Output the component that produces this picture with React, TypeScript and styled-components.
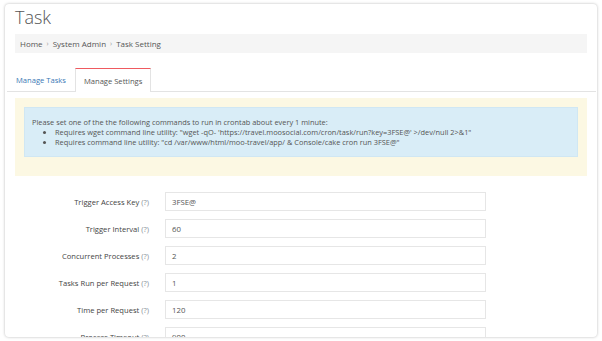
import React from "react";
import styled, { createGlobalStyle } from "styled-components";

const GlobalStyle = createGlobalStyle`
  html, body {
    margin: 0;
    padding: 0;
    background: #fff;
  }
  body {
    font-family: "Open Sans", "Liberation Sans", sans-serif;
    color: #555;
  }
`;

const Page = styled.div`
  padding: 4px 5px;
  height: 341px;
  box-sizing: border-box;
`;

const Card = styled.div`
  height: 333px;
  box-sizing: border-box;
  background: #fff;
  border-radius: 4px;
  box-shadow: 0 0 3px rgba(0, 0, 0, 0.28);
  overflow: hidden;
  padding: 0 10px;
`;

const Title = styled.h1`
  margin: 0;
  padding-top: 2px;
  font-size: 18px;
  font-weight: 300;
  line-height: 22px;
  color: #555;
`;

const Breadcrumb = styled.div`
  margin-top: 6px;
  height: 19px;
  background: #f5f5f5;
  display: flex;
  align-items: center;
  padding: 0 5px;
  font-size: 8px;
  color: #555;
  gap: 4px;
`;

const Sep = styled.span`
  color: #999;
  font-size: 7px;
`;

const Tabs = styled.div`
  margin: 14px -9px 0 -8px;
  height: 24px;
  border-bottom: 1px solid #e3e3e3;
  display: flex;
  align-items: flex-end;
  padding-left: 1px;
`;

const Tab = styled.div<{ $active?: boolean }>`
  height: ${(p) => (p.$active ? "24px" : "23px")};
  box-sizing: border-box;
  display: flex;
  align-items: center;
  font-size: 7.6px;
  color: ${(p) => (p.$active ? "#555" : "#3a78b5")};
  margin-bottom: ${(p) => (p.$active ? "-1px" : "0")};
  background: #fff;
  border-top: ${(p) => (p.$active ? "1px solid #ef5a60" : "none")};
  border-left: ${(p) => (p.$active ? "1px solid #e3e3e3" : "none")};
  border-right: ${(p) => (p.$active ? "1px solid #e3e3e3" : "none")};
  padding-left: ${(p) => (p.$active ? "8px" : "8px")};
  padding-right: ${(p) => (p.$active ? "8px" : "9px")};
`;

const Notice = styled.div`
  margin-top: 6px;
  background: #fcf8e3;
  padding: 9px 9px 19px 9px;
`;

const Info = styled.div`
  background: #d9edf7;
  border: 1px solid #d0e7f3;
  padding: 9px 8px 9px 7px;
  font-size: 7.4px;
  line-height: 10px;
  color: #555;
`;

const List = styled.ul`
  margin: 0;
  padding-left: 23px;
`;

const Form = styled.div`
  margin-top: 16px;
  display: flex;
  flex-direction: column;
  gap: 8px;
`;

const Row = styled.div`
  display: grid;
  grid-template-columns: 134px 321px;
  column-gap: 16px;
  align-items: center;
`;

const Label = styled.label`
  text-align: right;
  font-size: 7.6px;
  color: #444;
`;

const Help = styled.span`
  color: #8a909a;
`;

const Input = styled.div`
  height: 19px;
  box-sizing: border-box;
  border: 1px solid #e6e6e6;
  display: flex;
  align-items: center;
  padding-left: 6px;
  font-size: 7.8px;
  color: #555;
`;

const fields = [
  ["Trigger Access Key", "3FSE@"],
  ["Trigger Interval", "60"],
  ["Concurrent Processes", "2"],
  ["Tasks Run per Request", "1"],
  ["Time per Request", "120"],
  ["Process Timeout", "900"],
];

export default function App() {
  return (
    <>
      <GlobalStyle />
      <Page>
        <Card>
          <Title>Task</Title>
          <Breadcrumb>
            <span>Home</span>
            <Sep>›</Sep>
            <span>System Admin</span>
            <Sep>›</Sep>
            <span>Task Setting</span>
          </Breadcrumb>
          <Tabs>
            <Tab>Manage Tasks</Tab>
            <Tab $active>Manage Settings</Tab>
          </Tabs>
          <Notice>
            <Info>
              Please set one of the the following commands to run in crontab about every 1 minute:
              <List>
                <li>
                  Requires wget command line utility: "wget -qO- 'https://travel.moosocial.com/cron/task/run?key=3FSE@' &gt;/dev/null 2&gt;&amp;1"
                </li>
                <li>
                  Requires command line utility: "cd /var/www/html/moo-travel/app/ &amp; Console/cake cron run 3FSE@"
                </li>
              </List>
            </Info>
          </Notice>
          <Form>
            {fields.map(([label, value]) => (
              <Row key={label}>
                <Label>
                  {label} <Help>(?)</Help>
                </Label>
                <Input>{value}</Input>
              </Row>
            ))}
          </Form>
        </Card>
      </Page>
    </>
  );
}
